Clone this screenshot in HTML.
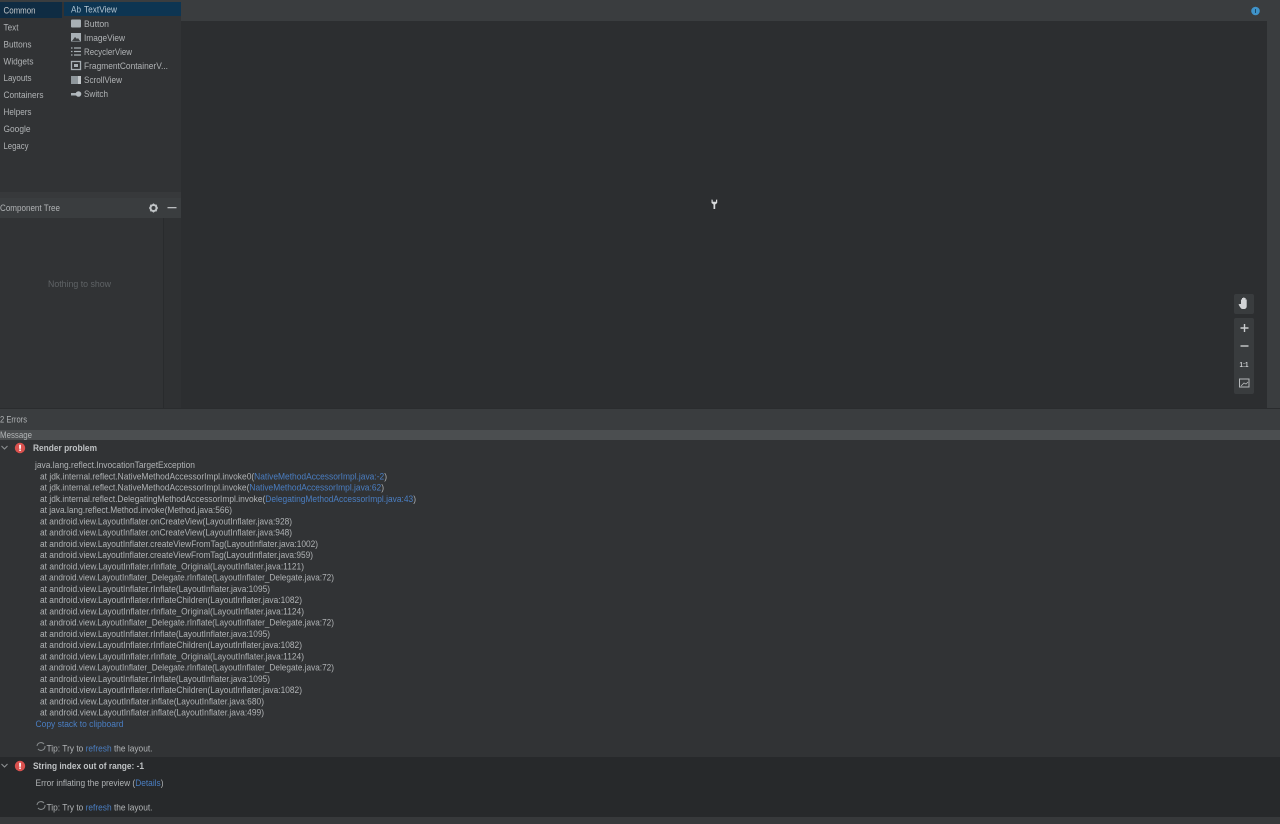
<!DOCTYPE html>
<html><head><meta charset="utf-8"><style>
html,body{margin:0;padding:0;width:1280px;height:824px;overflow:hidden;background:#313335}
svg{display:block;filter:blur(.35px)}
text{font-family:"Liberation Sans",sans-serif;font-size:8.8px;fill:#b0b3b5}
</style></head><body>
<svg width="1280" height="824" viewBox="0 0 1280 824" xmlns="http://www.w3.org/2000/svg">
<rect width="1280" height="824" fill="#313335"/>
<rect x="0" y="0" width="1280" height="2" fill="#3a3d3f"/>
<!-- canvas -->
<rect x="181" y="21" width="1086" height="387" fill="#2c2e30"/>
<rect x="181" y="1" width="1086" height="20" fill="#3a3d3f"/>
<rect x="1267" y="0" width="13" height="408" fill="#3a3d3f"/>
<!-- palette -->
<rect x="0" y="2" width="181" height="196" fill="#313335"/>
<rect x="0" y="2" width="62" height="16" fill="#0f2c43"/>
<rect x="64" y="2" width="117" height="14" fill="#0d3552"/>
<rect x="0" y="192" width="181" height="6" fill="#37393b"/>
<rect x="0" y="198" width="181" height="20" fill="#3a3d3f"/>
<rect x="163" y="218" width="18" height="190" fill="#2f3133"/>
<rect x="163" y="218" width="1" height="190" fill="#292b2d"/>
<g>
<text x="3.500" y="13.500" textLength="32" lengthAdjust="spacingAndGlyphs" style="fill:#c5c8ca">Common</text>
<text x="3.500" y="30.500" textLength="15" lengthAdjust="spacingAndGlyphs">Text</text>
<text x="3.500" y="47.500" textLength="28" lengthAdjust="spacingAndGlyphs">Buttons</text>
<text x="3.500" y="64.500" textLength="30" lengthAdjust="spacingAndGlyphs">Widgets</text>
<text x="3.500" y="81" textLength="28" lengthAdjust="spacingAndGlyphs">Layouts</text>
<text x="3.500" y="98" textLength="40" lengthAdjust="spacingAndGlyphs">Containers</text>
<text x="3.500" y="115" textLength="28" lengthAdjust="spacingAndGlyphs">Helpers</text>
<text x="3.500" y="132" textLength="27" lengthAdjust="spacingAndGlyphs">Google</text>
<text x="3.500" y="149" textLength="25" lengthAdjust="spacingAndGlyphs">Legacy</text>
<text x="71" y="12.500" textLength="10" lengthAdjust="spacingAndGlyphs" style="fill:#a9c0d0">Ab</text>
<text x="84" y="12.500" textLength="33" lengthAdjust="spacingAndGlyphs" style="fill:#b4c4d0">TextView</text>
<text x="84" y="27" textLength="25" lengthAdjust="spacingAndGlyphs">Button</text>
<text x="84" y="41" textLength="41" lengthAdjust="spacingAndGlyphs">ImageView</text>
<text x="84" y="55" textLength="48" lengthAdjust="spacingAndGlyphs">RecyclerView</text>
<text x="84" y="69" textLength="84" lengthAdjust="spacingAndGlyphs">FragmentContainerV...</text>
<text x="84" y="83" textLength="38" lengthAdjust="spacingAndGlyphs">ScrollView</text>
<text x="84" y="97" textLength="24" lengthAdjust="spacingAndGlyphs">Switch</text>
</g>
<!-- palette icons -->
<rect x="71" y="19.500" width="10" height="8" rx="1" fill="#a8b0b5"/>
<rect x="71" y="33" width="10" height="8.500" fill="#a8b0b5"/><path d="M72 41l3-4 2 2 1-1 2 3z" fill="#3c3f41"/>
<path d="M74 48h7M74 51.500h7M74 55h7M71 48h1.500M71 51.500h1.500M71 55h1.500" stroke="#a8b0b5" stroke-width="1.200"/>
<rect x="71.500" y="61.500" width="9" height="8" fill="none" stroke="#a8b0b5" stroke-width="1.300"/><rect x="74" y="64" width="4" height="3" fill="#a8b0b5"/>
<rect x="71" y="76" width="10" height="8" fill="#8f979c"/><rect x="78" y="76" width="3" height="8" fill="#c3c8cb"/>
<rect x="71" y="93" width="5" height="2.500" fill="#a8b0b5"/><circle cx="78.500" cy="94" r="2.800" fill="#b4bbc0"/>
<!-- tree header -->
<text x="0" y="211" textLength="60" lengthAdjust="spacingAndGlyphs">Component Tree</text>
<circle cx="153.500" cy="208" r="3" fill="none" stroke="#c0c4c6" stroke-width="2"/>
<path d="M153.500 203.500v1.500M153.500 211v1.500M149 208h1.500M156.500 208h1.500M150.300 204.800l1 1M155.700 210.200l1 1M150.300 211.200l1-1M155.700 205.800l1-1" stroke="#c0c4c6" stroke-width="1.300"/>
<rect x="167.500" y="207" width="9" height="1.300" fill="#b9bcbe"/>
<text x="48" y="287" textLength="63" lengthAdjust="spacingAndGlyphs" style="fill:#5f6366">Nothing to show</text>
<!-- top-right help -->
<circle cx="1255.500" cy="11" r="4.300" fill="#3f93c9"/><rect x="1255" y="9" width="1" height="4" fill="#1d4a68"/>
<!-- wrench -->
<path d="M711.500 199.500v3.500l2 1.500v4.500h1.700v-4.500l2-1.500v-3.500l-1.200.2v2h-3.300v-2z" fill="#d8dadc"/>
<!-- zoom controls -->
<rect x="1234" y="294" width="20" height="20" rx="2" fill="#393c3e"/>
<path d="M1241 304v-4.500h1v3.500-5h1.200v5-5.500h1.200v5.500-5h1.200v5-3.500h1.100v6.500c0 2-1 3-3 3h-1c-1.500 0-2-1-3-2.500l-1.200-2 1-.5z" fill="#d2d4d6"/>
<rect x="1234" y="318" width="20" height="76" rx="2" fill="#393c3e"/>
<path d="M1240.500 328h8M1244.500 324v8" stroke="#c9ccce" stroke-width="1.400"/>
<path d="M1240.500 346h8" stroke="#c9ccce" stroke-width="1.400"/>
<text x="1239.500" y="367" textLength="9" lengthAdjust="spacingAndGlyphs" style="fill:#c9ccce;font-size:7.500px;font-weight:bold">1:1</text>
<rect x="1239.500" y="379" width="9.500" height="8" fill="none" stroke="#b5b8ba" stroke-width="1"/><path d="M1241 386l3-3 2 1 2-2" stroke="#b5b8ba" stroke-width=".8" fill="none"/>
<!-- bottom panel -->
<rect x="0" y="408" width="1280" height="22" fill="#3a3d3f"/>
<rect x="0" y="408" width="1280" height="1" fill="#2a2c2e"/>
<text x="0" y="422.500" textLength="27" lengthAdjust="spacingAndGlyphs">2 Errors</text>
<rect x="0" y="430" width="1280" height="10" fill="#4b4e50"/>
<text x="0" y="438" textLength="32" lengthAdjust="spacingAndGlyphs">Message</text>
<rect x="0" y="440" width="1280" height="317" fill="#313335"/>
<rect x="0" y="757" width="1280" height="60" fill="#27292b"/>
<rect x="0" y="817" width="1280" height="7" fill="#37393b"/>
<!-- Render problem -->
<path d="M1.500 446l3 3 3-3" fill="none" stroke="#8d9193" stroke-width="1.100"/>
<circle cx="20" cy="448" r="5.200" fill="#d9514e"/><rect x="19.200" y="444.800" width="1.700" height="4" fill="#fff"/><rect x="19.200" y="449.500" width="1.700" height="1.400" fill="#fff"/>
<text x="33" y="451" textLength="64" lengthAdjust="spacingAndGlyphs" style="font-weight:bold;fill:#bfc2c4">Render problem</text>
<text x="35" y="468" textLength="160" lengthAdjust="spacingAndGlyphs">java.lang.reflect.InvocationTargetException</text>
<text x="40" y="479.500" textLength="347" lengthAdjust="spacingAndGlyphs">at jdk.internal.reflect.NativeMethodAccessorImpl.invoke0(<tspan style="fill:#4a7ec2">NativeMethodAccessorImpl.java:-2</tspan>)</text>
<text x="40" y="490.500" textLength="344" lengthAdjust="spacingAndGlyphs">at jdk.internal.reflect.NativeMethodAccessorImpl.invoke(<tspan style="fill:#4a7ec2">NativeMethodAccessorImpl.java:62</tspan>)</text>
<text x="40" y="502" textLength="376" lengthAdjust="spacingAndGlyphs">at jdk.internal.reflect.DelegatingMethodAccessorImpl.invoke(<tspan style="fill:#4a7ec2">DelegatingMethodAccessorImpl.java:43</tspan>)</text>
<text x="40" y="513" textLength="192" lengthAdjust="spacingAndGlyphs">at java.lang.reflect.Method.invoke(Method.java:566)</text>
<text x="40" y="524.500" textLength="252" lengthAdjust="spacingAndGlyphs">at android.view.LayoutInflater.onCreateView(LayoutInflater.java:928)</text>
<text x="40" y="535.500" textLength="252" lengthAdjust="spacingAndGlyphs">at android.view.LayoutInflater.onCreateView(LayoutInflater.java:948)</text>
<text x="40" y="547" textLength="278" lengthAdjust="spacingAndGlyphs">at android.view.LayoutInflater.createViewFromTag(LayoutInflater.java:1002)</text>
<text x="40" y="558" textLength="273" lengthAdjust="spacingAndGlyphs">at android.view.LayoutInflater.createViewFromTag(LayoutInflater.java:959)</text>
<text x="40" y="569.500" textLength="264" lengthAdjust="spacingAndGlyphs">at android.view.LayoutInflater.rInflate_Original(LayoutInflater.java:1121)</text>
<text x="40" y="580.500" textLength="294" lengthAdjust="spacingAndGlyphs">at android.view.LayoutInflater_Delegate.rInflate(LayoutInflater_Delegate.java:72)</text>
<text x="40" y="592" textLength="230" lengthAdjust="spacingAndGlyphs">at android.view.LayoutInflater.rInflate(LayoutInflater.java:1095)</text>
<text x="40" y="603" textLength="262" lengthAdjust="spacingAndGlyphs">at android.view.LayoutInflater.rInflateChildren(LayoutInflater.java:1082)</text>
<text x="40" y="614.500" textLength="264" lengthAdjust="spacingAndGlyphs">at android.view.LayoutInflater.rInflate_Original(LayoutInflater.java:1124)</text>
<text x="40" y="625.500" textLength="294" lengthAdjust="spacingAndGlyphs">at android.view.LayoutInflater_Delegate.rInflate(LayoutInflater_Delegate.java:72)</text>
<text x="40" y="637" textLength="230" lengthAdjust="spacingAndGlyphs">at android.view.LayoutInflater.rInflate(LayoutInflater.java:1095)</text>
<text x="40" y="648" textLength="262" lengthAdjust="spacingAndGlyphs">at android.view.LayoutInflater.rInflateChildren(LayoutInflater.java:1082)</text>
<text x="40" y="659.500" textLength="264" lengthAdjust="spacingAndGlyphs">at android.view.LayoutInflater.rInflate_Original(LayoutInflater.java:1124)</text>
<text x="40" y="670.500" textLength="294" lengthAdjust="spacingAndGlyphs">at android.view.LayoutInflater_Delegate.rInflate(LayoutInflater_Delegate.java:72)</text>
<text x="40" y="682" textLength="230" lengthAdjust="spacingAndGlyphs">at android.view.LayoutInflater.rInflate(LayoutInflater.java:1095)</text>
<text x="40" y="693" textLength="262" lengthAdjust="spacingAndGlyphs">at android.view.LayoutInflater.rInflateChildren(LayoutInflater.java:1082)</text>
<text x="40" y="704.500" textLength="224" lengthAdjust="spacingAndGlyphs">at android.view.LayoutInflater.inflate(LayoutInflater.java:680)</text>
<text x="40" y="715.500" textLength="224" lengthAdjust="spacingAndGlyphs">at android.view.LayoutInflater.inflate(LayoutInflater.java:499)</text>
<text x="35.500" y="727" textLength="88" lengthAdjust="spacingAndGlyphs" style="fill:#4a7ec2">Copy stack to clipboard</text>
<!-- tip 1 -->
<path d="M37 746a4 4 0 0 1 7-2M45 746a4 4 0 0 1-7 3" fill="none" stroke="#85898b" stroke-width="1"/>
<text x="46.500" y="751.500" textLength="106" lengthAdjust="spacingAndGlyphs">Tip: Try to <tspan style="fill:#4a7ec2">refresh</tspan> the layout.</text>
<!-- second -->
<path d="M1.500 764l3 3 3-3" fill="none" stroke="#8d9193" stroke-width="1.100"/>
<circle cx="20" cy="766" r="5.200" fill="#d9514e"/><rect x="19.200" y="762.800" width="1.700" height="4" fill="#fff"/><rect x="19.200" y="767.500" width="1.700" height="1.400" fill="#fff"/>
<text x="33" y="769" textLength="111" lengthAdjust="spacingAndGlyphs" style="font-weight:bold;fill:#bfc2c4">String index out of range: -1</text>
<text x="35.500" y="786" textLength="128" lengthAdjust="spacingAndGlyphs">Error inflating the preview (<tspan style="fill:#4a7ec2">Details</tspan>)</text>
<path d="M37 805a4 4 0 0 1 7-2M45 805a4 4 0 0 1-7 3" fill="none" stroke="#85898b" stroke-width="1"/>
<text x="46.500" y="810.500" textLength="106" lengthAdjust="spacingAndGlyphs">Tip: Try to <tspan style="fill:#4a7ec2">refresh</tspan> the layout.</text>
</svg>
</body></html>
